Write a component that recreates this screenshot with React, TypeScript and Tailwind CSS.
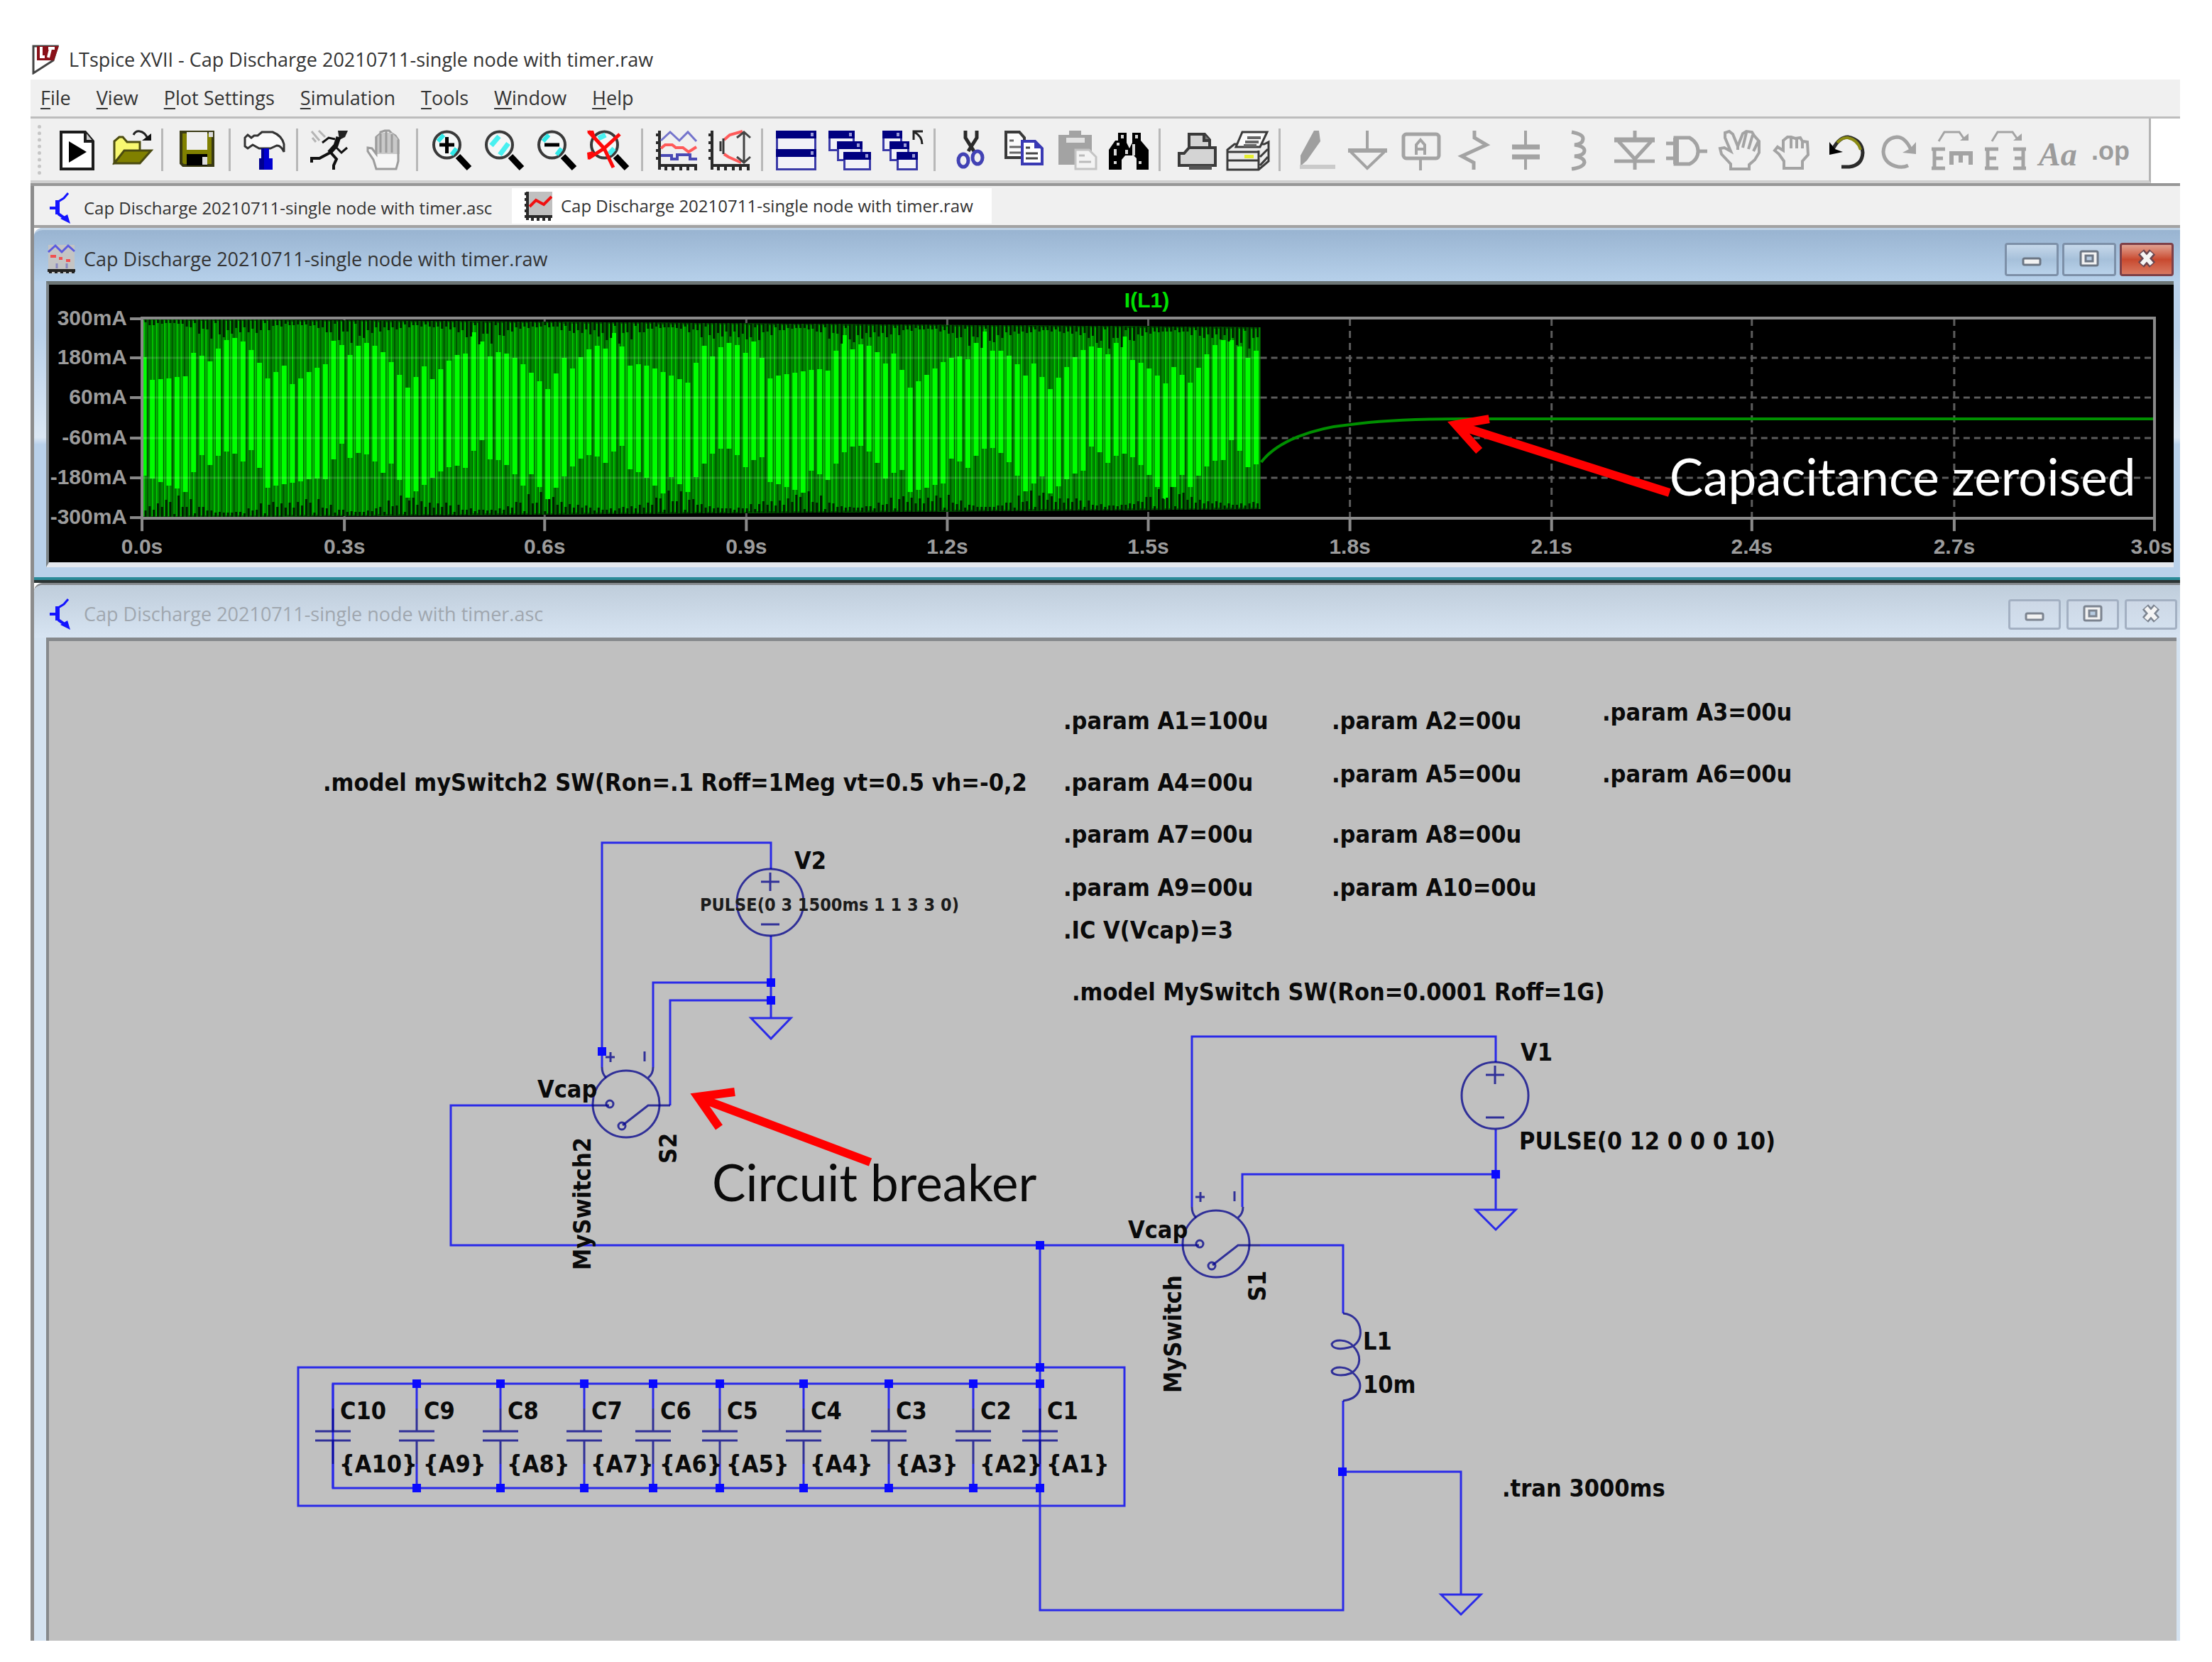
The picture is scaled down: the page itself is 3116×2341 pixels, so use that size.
import React from "react";

const UI = "font-['Open_Sans','Noto_Sans',sans-serif]";
const G = "#a3a3a3";
const NAVY = "#00008b";

/* ---------- toolbar icons (60 x 60 grid) ---------- */

function Lens({ children }: { children?: React.ReactNode }) {
  return (
    <g>
      <path d="M40 39 L56 56" stroke="#000" strokeWidth="9" />
      <circle cx="24.5" cy="23" r="18.5" fill="#f4f6f6" stroke="#3a3a3a" strokeWidth="4" />
      {children}
    </g>
  );
}

function MiniWindow({ x, y, w, h }: { x: number; y: number; w: number; h: number }) {
  return (
    <g>
      <rect x={x + 1.5} y={y + 1.5} width={w - 3} height={h - 3} fill="#f2f2f8" stroke="#3a3aa8" strokeWidth="3" />
      <rect x={x} y={y} width={w} height="11" fill="#000080" />
      <rect x={x + w - 8} y={y + 3} width="4" height="5" fill="#9a9ad8" />
    </g>
  );
}

function Axes() {
  return (
    <path
      d="M7 3V58M2 9H7M2 20H7M2 31H7M2 42H7M5 52H60M16 52V59M26 52V59M37 52V59M47 52V59M58 52V59"
      stroke="#2a2a2a"
      strokeWidth="4"
    />
  );
}

const icons: Record<string, React.ReactNode> = {
  "New Schematic": (
    <g stroke="#1c1c1c" strokeWidth="4">
      <path d="M9 5H43L54 18V57H9Z" fill="#fff" />
      <path d="M43 5V18H54" fill="#ccc" />
      <path d="M20 18L45 33L20 48Z" fill="#000" stroke="none" />
    </g>
  ),
  Open: (
    <g>
      <path d="M10 48V18L17 12H22L28 19H46V32L24 34Z" fill="#f8f870" stroke="#4d4d10" strokeWidth="3" />
      <path d="M10 49L24 31H62L46 49Z" fill="#808000" stroke="#4a4a10" strokeWidth="3" />
      <path d="M37 9Q40 3 46 4Q53 5 57 14" stroke="#222" strokeWidth="3" fill="none" />
      <path d="M49 17H62V7Z" fill="#111" />
    </g>
  ),
  Save: (
    <g>
      <path d="M9 5H54V52H12L9 49Z" fill="#808000" stroke="#3a3a14" strokeWidth="4" />
      <rect x="17" y="5" width="29" height="25" fill="#efefef" />
      <rect x="48" y="5" width="6" height="7" fill="#ddd" />
      <rect x="17" y="36" width="29" height="16" fill="#000" />
      <rect x="39" y="40" width="7" height="11" fill="#ddd" />
    </g>
  ),
  "Control Panel": (
    <g>
      <path
        d="M4 13L8 9L13 13L17 10H22L28 5H43Q56 10 59 22V33Q55 24 49 24L40 28H24L15 23L8 28L4 25Z"
        fill="#fafafa"
        stroke="#333"
        strokeWidth="3"
      />
      <path d="M27 28H38V42H43V58H24V42H27Z" fill="#0000d0" />
      <path d="M27 28H31V58H24V42H27Z" fill="#000090" />
    </g>
  ),
  Run: (
    <g fill="none" stroke="#111" strokeWidth="3">
      <path d="M40 3H54L50 12L42 16Z" fill="#222" stroke="none" />
      <path d="M41 12L37 24L28 34" strokeWidth="7" />
      <path d="M36 15L27 13L18 20M38 27L45 34L53 27" />
      <path d="M29 34L14 42H3V48M30 34L38 43L34 52V58" strokeWidth="4" />
      <path d="M3 4L14 17M13 3L22 12M4 13L9 19" stroke="#b5b5b5" />
    </g>
  ),
  Halt: (
    <g stroke="#9c9c9c" strokeWidth="3" fill="#f6f6f6">
      <path d="M20 57L16 44L8 32V27L14 28L20 36V12L26 7V5L32 3H38L42 7L47 10L51 16V46L48 57Z" />
      <path d="M21 12L27 6H42L50 14V36H21Z" fill="#c9c9c9" stroke="none" />
      <path d="M26 7V34M34 4V34M42 8V34M20 12V36M51 16V36" fill="none" />
    </g>
  ),
  "Zoom to rectangle": (
    <Lens>
      <path d="M12 18L20 9M31 37L38 28" stroke="#30e8e8" strokeWidth="6" />
      <path d="M14 23H35M24.5 12V35" stroke="#000" strokeWidth="5" />
    </Lens>
  ),
  Pan: (
    <Lens>
      <path d="M13 24L24 11M25 37L37 21" stroke="#48f0f0" strokeWidth="7" />
    </Lens>
  ),
  "Zoom back": (
    <Lens>
      <path d="M12 18L20 9M31 37L38 28" stroke="#30e8e8" strokeWidth="6" />
      <path d="M14 23H35" stroke="#000" strokeWidth="5" />
    </Lens>
  ),
  "Zoom full extents": (
    <Lens>
      <path d="M16 14L26 9M31 36L38 28" stroke="#48f0f0" strokeWidth="7" />
      <path d="M2 4L24 28L37 55M46 8L24 28L2 42" stroke="#ff0a0a" strokeWidth="5" fill="none" />
      <path d="M0 3H9L12 12L3 9ZM0 34L8 32L12 38L1 44Z" fill="#ff0a0a" />
    </Lens>
  ),
  Autorange: (
    <g fill="none">
      <Axes />
      <path d="M9 17L22 5L35 17L47 5L59 18" stroke="#7474cc" strokeWidth="3" />
      <path d="M9 28L15 23H25L30 27H40L48 33L59 26" stroke="#ff5a5a" strokeWidth="4" />
      <path d="M9 38H24V43H32V37H50V43H60" stroke="#4a4ab4" strokeWidth="4" />
    </g>
  ),
  "Plot limits": (
    <g fill="none">
      <Axes />
      <path d="M50 4L32 9L24 16M24 36L30 40L48 48" stroke="#ff5a5a" strokeWidth="4" />
      <path d="M23 14V36M19 18V32" stroke="#333" strokeWidth="3" />
      <path d="M52 5V47M42 13L52 5L61 13M42 40L52 48L61 40" stroke="#444" strokeWidth="3" />
    </g>
  ),
  "Tile Horizontally": (
    <g>
      <MiniWindow x={2} y={3} w={57} h={29} />
      <MiniWindow x={2} y={29} w={57} h={30} />
    </g>
  ),
  Cascade: (
    <g>
      <MiniWindow x={2} y={3} w={37} h={29} />
      <MiniWindow x={14} y={18} w={36} h={28} />
      <MiniWindow x={23} y={33} w={39} h={26} />
    </g>
  ),
  "Close all": (
    <g>
      <MiniWindow x={4} y={3} w={28} h={29} />
      <MiniWindow x={14} y={18} w={28} h={28} />
      <MiniWindow x={24} y={33} w={30} h={26} />
      <path d="M48 16V4H61M49 5Q60 11 60 22" stroke="#222" strokeWidth="3" fill="none" />
    </g>
  ),
  Cut: (
    <g fill="none">
      <path d="M26 3V13L38 32M42 3V13L30 32" stroke="#2a2a2a" strokeWidth="5" />
      <ellipse cx="23" cy="45" rx="7" ry="9" stroke="#4242b4" strokeWidth="5" />
      <ellipse cx="43" cy="41" rx="7" ry="9" stroke="#4242b4" strokeWidth="5" />
    </g>
  ),
  Copy: (
    <g>
      <path d="M9 5H28L35 13V41H9Z" fill="#fbfbfb" stroke="#3a3a3a" strokeWidth="4" />
      <path d="M14 17H20M14 26H30M14 34H30" stroke="#666" strokeWidth="3" />
      <path d="M32 18H50L60 28V50H32Z" fill="#fff" stroke="#3a3ab4" strokeWidth="4" />
      <path d="M49 18V28H60Z" fill="#3a3ab4" />
      <path d="M37 27H43M37 35H54M37 42H54" stroke="#444" strokeWidth="3" />
    </g>
  ),
  Paste: (
    <g>
      <path d="M9 9H24V3H41V9H56V51H9Z" fill={G} />
      <rect x="20" y="13" width="26" height="7" fill="#e2e2e2" />
      <path d="M33 30H52L62 40V57H33Z" fill="#f3f3f3" stroke="#c4c4c4" strokeWidth="3" />
      <path d="M38 38H46M38 47H55" stroke="#bbb" strokeWidth="3" />
    </g>
  ),
  Find: (
    <g>
      <path d="M19 6H31V20L35 28L39 20V6H51V17L62 30V58H45V42L41 38H29L24 44V58H6V30L15 17H19Z" fill="#000" />
      <path d="M15 29V38M41 22V38M25 9V14M45 9V14M19 24V20M15 46V50M50 46V50M31 30V36" stroke="#d8d8d8" strokeWidth="4" />
    </g>
  ),
  "Print setup": (
    <g stroke="#3a3a3a" strokeWidth="4">
      <path d="M24 26V8H46L53 16V26" fill="#d4d4d4" />
      <path d="M10 52V35H17L24 27H61V52Z" fill="#d4d4d4" />
      <path d="M45 8V17H54" fill="#777" />
      <path d="M24 55H56" stroke="#555" strokeWidth="6" />
    </g>
  ),
  Print: (
    <g stroke="#3a3a3a" strokeWidth="3">
      <path d="M4 30L14 22H56L62 19V46L48 58H4Z" fill="#ececec" />
      <path d="M16 26L25 5H60L50 26Z" fill="#fbfbfb" />
      <path d="M32 13H51M29 19H48M27 24H45" stroke="#666" strokeWidth="4" />
      <path d="M4 33H48M4 45H48M48 31V57M50 40L61 29M50 52L61 40" fill="none" />
      <rect x="28" y="37" width="13" height="5" fill="#e6ee30" stroke="none" />
    </g>
  ),
  Wire: (
    <g>
      <path d="M30 3H37L39 18L20 45L11 53V38Z" fill="#9f9f9f" />
      <path d="M10 54H60" stroke="#cacaca" strokeWidth="6" />
    </g>
  ),
  Ground: (
    <g fill="none" stroke={G} strokeWidth="4">
      <path d="M30 3V28" />
      <path d="M3 31H58" strokeWidth="6" />
      <path d="M7 33L30 56L54 33" />
    </g>
  ),
  "Label Net": (
    <g fill="none" stroke={G} strokeWidth="4">
      <rect x="6" y="8" width="50" height="34" rx="4" strokeWidth="5" />
      <path d="M24 37V23L30 16L36 23V37M24 29H36M30 42V59" />
    </g>
  ),
  Resistor: <path d="M31 3V13L48 23L13 39L30 48V58" fill="none" stroke={G} strokeWidth="5" />,
  Capacitor: (
    <g stroke={G}>
      <path d="M28 3V24M28 42V58" strokeWidth="4" />
      <path d="M9 26H48M9 40H48" strokeWidth="7" />
    </g>
  ),
  Inductor: <path d="M18 5Q34 8 34 14Q34 22 22 23Q36 25 36 31Q36 38 22 39Q36 41 36 48Q34 55 18 57" fill="none" stroke={G} strokeWidth="5" />,
  Diode: (
    <g stroke={G} fill="none">
      <path d="M32 3V16M32 42V58M3 46H60" strokeWidth="5" />
      <path d="M3 16H60" strokeWidth="7" />
      <path d="M9 18L32 43L55 18" strokeWidth="5" />
    </g>
  ),
  Component: (
    <g stroke={G} fill="none" strokeWidth="5">
      <path d="M14 13H34Q46 20 46 32Q46 44 34 50H14Z" />
      <path d="M15 13V50" strokeWidth="8" />
      <path d="M1 21H14M1 42H14M46 32H59" />
    </g>
  ),
  Move: (
    <path
      d="M17 57V50L4 36L2 28L8 27L17 32L9 13L9 6L15 4L20 8L27 25L34 7L39 4L47 5L50 10L57 18L57 34L51 44L43 51V57ZM27 25V30M39 6L34 27M48 9L42 29M56 18L49 32"
      fill="none"
      stroke={G}
      strokeWidth="4"
    />
  ),
  Drag: (
    <path
      d="M17 56V46L10 36L4 31L8 26L16 31V17L22 12H27L33 14L40 13L43 18L50 19L51 37L43 46V56ZM16 17V31M27 14V28M35 14V28M43 18V28"
      fill="none"
      stroke={G}
      strokeWidth="4"
    />
  ),
  Undo: (
    <g fill="none">
      <path d="M11 29Q20 12 32 12Q52 16 53 34Q52 52 34 54H23" stroke="#2b2b2b" strokeWidth="5" />
      <path d="M17 20Q24 12 32 13Q46 16 50 30" stroke="#8b8b14" strokeWidth="4" />
      <path d="M6 19V37L25 33L14 29Z" fill="#000" />
    </g>
  ),
  Redo: (
    <g fill="none">
      <path d="M42 52Q34 56 24 53Q8 48 7 33Q8 14 26 12Q38 12 46 30" stroke={G} strokeWidth="5" />
      <path d="M53 19V36L34 34L45 28Z" fill={G} />
    </g>
  ),
  Rotate: (
    <g fill="none" stroke={G} strokeWidth="4">
      <path d="M10 18L18 5H39L46 15" strokeWidth="3" />
      <path d="M40 17H52V7Z" fill={G} stroke="none" />
      <path d="M4 27V58M0 29H19M4 42H16M0 56H19" strokeWidth="5" />
      <path d="M25 35H58M28 33V51M41 35V48M55 33V51" strokeWidth="6" />
    </g>
  ),
  Mirror: (
    <g fill="none" stroke={G} strokeWidth="5">
      <path d="M10 18L18 5H39L46 15" strokeWidth="3" />
      <path d="M40 17H52V7Z" fill={G} stroke="none" />
      <path d="M4 27V58M0 29H19M4 42H16M0 56H19" />
      <path d="M54 27V58M58 29H40M54 42H42M58 56H40" />
    </g>
  ),
  Text: (
    <text x="1" y="52" fill="#9c9c9c" className="font-['Liberation_Serif',serif] text-[46px] font-bold italic">
      Aa
    </text>
  ),
  "SPICE Directive": (
    <text x="0" y="44" fill="#9c9c9c" className="font-['Liberation_Sans',sans-serif] text-[36px] font-bold">
      .op
    </text>
  ),
};

const toolGroups: string[][] = [
  ["New Schematic", "Open"],
  ["Save"],
  ["Control Panel"],
  ["Run", "Halt"],
  ["Zoom to rectangle", "Pan", "Zoom back", "Zoom full extents"],
  ["Autorange", "Plot limits"],
  ["Tile Horizontally", "Cascade", "Close all"],
  ["Cut", "Copy", "Paste", "Find"],
  ["Print setup", "Print"],
  ["Wire", "Ground", "Label Net", "Resistor", "Capacitor", "Inductor", "Diode", "Component", "Move", "Drag", "Undo", "Redo", "Rotate", "Mirror", "Text", "SPICE Directive"],
];

function Toolbar() {
  return (
    <div className="flex border-b-[4px] border-[#979797] bg-white">
      <div className="flex h-[91px] items-center border-r-[3px] border-b-[4px] border-r-[#b4b4b4] border-b-[#cfcfcf] bg-[#f0f0f0] pr-[14px] pl-[10px]">
        <div className="mr-[12px] h-[70px] border-l-[5px] border-dotted border-[#c6c6c6]" />
        {toolGroups.map((group, gi) => (
          <React.Fragment key={gi}>
            {gi > 0 && <div className="mx-[9px] h-[60px] w-[3px] bg-[#b8b8b8]" />}
            {group.map((name) => (
              <button
                key={name}
                type="button"
                aria-label={name}
                className={gi === 9 ? "flex w-[75px] justify-center" : "flex w-[74px] justify-center"}
              >
                <svg viewBox="0 0 60 60" className="size-[60px] overflow-visible">
                  {icons[name]}
                </svg>
              </button>
            ))}
          </React.Fragment>
        ))}
      </div>
    </div>
  );
}

/* ---------- small window / tab icons ---------- */

function TransistorIcon() {
  return (
    <svg viewBox="0 0 40 44" className="h-[44px] w-[40px] shrink-0" fill="none" stroke="#1414ff">
      <path d="M4 22H14" strokeWidth="4" />
      <path d="M15 11V31" strokeWidth="6" />
      <path d="M16 13L24 8L30 1" strokeWidth="3" />
      <path d="M16 30L26 37" strokeWidth="4" />
      <path d="M19 37L29 31L33 44Z" fill="#1414ff" stroke="none" />
    </svg>
  );
}

function PlotIcon() {
  return (
    <svg viewBox="0 0 40 44" className="h-[44px] w-[40px] shrink-0" fill="none">
      <rect x="5" y="2" width="35" height="34" fill="#c0c0c0" />
      <path d="M5 2V42M1 5H5M1 13H5M1 21H5M1 29H5M1 37H40M12 37V43M20 37V43M28 37V43M36 37V43" stroke="#2a2a2a" strokeWidth="4" />
      <path d="M8 23L17 14L28 20L39 9" stroke="#f01010" strokeWidth="4" />
    </svg>
  );
}

function WaveIcon() {
  return (
    <svg viewBox="0 0 40 44" className="h-[44px] w-[40px] shrink-0" fill="none">
      <rect x="2" y="2" width="37" height="40" fill="#c4c4c4" />
      <path d="M2 12L12 3L21 12L30 3L39 11" stroke="#5a5ae0" strokeWidth="3" />
      <path d="M5 18H13M17 21H22M27 24H33" stroke="#f05050" strokeWidth="4" />
      <path d="M14 28V35M28 28V35" stroke="#8888c0" strokeWidth="3" />
      <path d="M1 38H40M5 42V36M13 42V36M21 42V36M29 42V36M37 42V36" stroke="#222" strokeWidth="4" />
    </svg>
  );
}

/* ---------- child window chrome ---------- */

function WindowButtons({ active }: { active: boolean }) {
  const size = active ? "h-[47px] w-[76px]" : "h-[43px] w-[74px]";
  const tone = active
    ? "border-[#7d90a8] bg-linear-to-b from-[#c6d8ea] via-[#a6c0da] to-[#b9d2ea]"
    : "border-[#a3b0c2] bg-linear-to-b from-[#cdd8e6] to-[#d3e0ee]";
  const close = active ? "border-[#7d4048] bg-linear-to-b from-[#e0a090] via-[#c8492f] to-[#d87860]" : tone;
  const base = "flex items-center justify-center rounded-[4px] border-[3px]";
  const line = active ? "#6c7684" : "#7c8490";
  return (
    <div className={active ? "flex gap-[5px]" : "flex gap-[8px]"}>
      <button type="button" aria-label="Minimize" className={`${base} ${size} ${tone}`}>
        <svg viewBox="0 0 30 30" className="size-[30px]">
          <rect x="3" y="14" width="24" height="9" rx="2" fill="#f2f2f2" stroke={line} strokeWidth="3" />
        </svg>
      </button>
      <button type="button" aria-label="Maximize" className={`${base} ${size} ${tone}`}>
        <svg viewBox="0 0 30 30" className="size-[30px]">
          <rect x="3" y="4" width="24" height="20" rx="2" fill="#f2f2f2" stroke={line} strokeWidth="3" />
          <rect x="10" y="10" width="10" height="8" fill="#b8cce2" stroke={line} strokeWidth="3" />
        </svg>
      </button>
      <button type="button" aria-label="Close" className={`${base} ${size} ${close}`}>
        <svg viewBox="0 0 30 30" className="size-[30px]">
          <path d="M7 5L23 23M23 5L7 23" stroke={active ? "#6a4650" : line} strokeWidth="11" />
          <path d="M8 6L22 22M22 6L8 22" stroke="#f5f5f5" strokeWidth="6" />
        </svg>
      </button>
    </div>
  );
}

/* ---------- waveform plot ---------- */

const PLOT = { left: 201, right: 3035, top: 448, bottom: 728, end: 1776 };
const yTicks = [
  ["300mA", 448],
  ["180mA", 503],
  ["60mA", 559],
  ["-60mA", 616],
  ["-180mA", 672],
  ["-300mA", 728],
] as const;
const xTicks = [
  ["0.0s", 201],
  ["0.3s", 486],
  ["0.6s", 768],
  ["0.9s", 1052],
  ["1.2s", 1335],
  ["1.5s", 1618],
  ["1.8s", 1902],
  ["2.1s", 2186],
  ["2.4s", 2468],
  ["2.7s", 2753],
  ["3.0s", 3035],
] as const;

function oscillation() {
  const dim: string[] = [];
  const mid: string[] = [];
  const bright: string[] = [];
  const dark: string[] = [];
  const noise = (k: number) => ((k * 7919 + 13 * k * k) % 17) / 17;
  const span = PLOT.end - PLOT.left;
  for (let k = 0; ; k++) {
    const x = PLOT.left + 2 + k * 5.8;
    if (x > PLOT.end - 2) break;
    const decay = (x - PLOT.left) / span;
    const top = PLOT.top + decay * 12;
    const bottom = PLOT.bottom - decay * 12;
    const phase = Math.cos(((x - 234) / 177) * 2 * Math.PI);
    dim.push(`M${x.toFixed(1)} ${top.toFixed(0)}V${bottom.toFixed(0)}`);
    dark.push(`M${(x + 3).toFixed(1)} ${top.toFixed(0)}v${(5 + 22 * noise(k) * (1.2 - phase) * 0.6).toFixed(0)}`);
    dark.push(`M${(x + 3).toFixed(1)} ${bottom.toFixed(0)}v-${(5 + 22 * noise(k + 5) * (1.2 + phase) * 0.6).toFixed(0)}`);
    if (k % 3 !== 1) mid.push(`M${(x + 1).toFixed(1)} ${(top + 2).toFixed(0)}V${(bottom - 2).toFixed(0)}`);
    if (k % 2 === 0) {
      const yt = 508 + 25 * phase + (noise(k) - 0.5) * 34;
      const yb = 662 + 26 * phase + (noise(k + 3) - 0.5) * 34;
      bright.push(`M${(x + 1).toFixed(1)} ${yt.toFixed(0)}V${yb.toFixed(0)}`);
    }
  }
  return { dim: dim.join(""), mid: mid.join(""), bright: bright.join(""), dark: dark.join("") };
}

const wave = oscillation();

function Plot() {
  return (
    <svg viewBox="70 400 2992 391" className="block h-auto w-full bg-black" role="img" aria-label="I(L1) waveform">
      <g stroke="#5c5c5c" strokeWidth="3" fill="none">
        {xTicks.slice(1, 10).map(([t, x]) => (
          <path key={t} d={`M${x} 448V728`} strokeDasharray="10 7" />
        ))}
        {yTicks.slice(1, 5).map(([t, y]) => (
          <path key={t} d={`M201 ${y}H3035`} strokeDasharray="9 6" />
        ))}
      </g>
      <path d="M201 448L1776 460V716L201 728Z" fill="#008600" />
      <g fill="none">
        <path d={wave.dim} stroke="#005600" strokeWidth="2" />
        <path d={wave.mid} stroke="#00c800" strokeWidth="2" />
        <path d={wave.bright} stroke="#00ff00" strokeWidth="7" />
        <path d={wave.dark} stroke="#001c00" strokeWidth="3" />
        <g stroke="#ffffff" strokeOpacity="0.14" strokeWidth="3">
          <path d="M201 503H1776M201 559H1776M201 616H1776M201 672H1776" />
        </g>
      </g>
      <path d="M1777 650C1800 620 1850 602 1903 597C1950 590 2010 589 2060 589H3035" stroke="#008f00" strokeWidth="4" fill="none" />
      <g stroke="#8a8a8a" strokeWidth="4" fill="none">
        <path d="M201 447H3035V729H201Z" />
        {xTicks.map(([t, x]) => (
          <path key={t} d={`M${x} 729V747`} />
        ))}
        {yTicks.map(([t, y]) => (
          <path key={t} d={`M184 ${y}H201`} />
        ))}
      </g>
      <g fill="#9c9c9c" className="font-['Liberation_Sans',sans-serif] text-[30px] font-bold">
        {yTicks.map(([t, y]) => (
          <text key={t} x="180" y={y + 9} textAnchor="end">
            {t}
          </text>
        ))}
        {xTicks.slice(0, 10).map(([t, x]) => (
          <text key={t} x={x} y="779" textAnchor="middle">
            {t}
          </text>
        ))}
        <text x="3060" y="779" textAnchor="end">
          3.0s
        </text>
      </g>
      <text x="1616" y="432" textAnchor="middle" fill="#00e000" className="font-['Liberation_Sans',sans-serif] text-[30px] font-bold">
        I(L1)
      </text>
      <path d="M2352 693L2060 600M2098 589L2051 597L2084 634" stroke="#ff0000" strokeWidth="12" fill="none" strokeLinejoin="miter" />
      <text x="2352" y="697" fill="#fff" className="font-['Lato',sans-serif] text-[71px]">
        Capacitance zeroised
      </text>
    </svg>
  );
}

/* ---------- schematic ---------- */

const caps: [number, number][] = [
  [10, 469],
  [9, 587],
  [8, 705],
  [7, 823],
  [6, 920],
  [5, 1014],
  [4, 1132],
  [3, 1252],
  [2, 1371],
  [1, 1465],
];

const labels: [number, number, string][] = [
  [455, 1114, ".model mySwitch2 SW(Ron=.1 Roff=1Meg vt=0.5 vh=-0,2"],
  [1498, 1027, ".param A1=100u"],
  [1876, 1027, ".param A2=00u"],
  [2257, 1015, ".param A3=00u"],
  [1498, 1114, ".param A4=00u"],
  [1876, 1102, ".param A5=00u"],
  [2257, 1102, ".param A6=00u"],
  [1498, 1187, ".param A7=00u"],
  [1876, 1187, ".param A8=00u"],
  [1498, 1262, ".param A9=00u"],
  [1876, 1262, ".param A10=00u"],
  [1498, 1322, ".IC V(Vcap)=3"],
  [1510, 1409, ".model MySwitch SW(Ron=0.0001 Roff=1G)"],
  [1119, 1224, "V2"],
  [2142, 1494, "V1"],
  [2140, 1619, "PULSE(0 12 0 0 0 10)"],
  [757, 1546, "Vcap"],
  [1589, 1744, "Vcap"],
  [1920, 1901, "L1"],
  [1920, 1962, "10m"],
  [2116, 2108, ".tran 3000ms"],
];

const junctions: [number, number][] = [
  [848, 1481],
  [1086, 1384],
  [1086, 1409],
  [2107, 1654],
  [1465, 1754],
  [1465, 1926],
  [1891, 2073],
];

function Source({ x, y }: { x: number; y: number }) {
  return (
    <g>
      <circle cx={x} cy={y} r="47" />
      <path d={`M${x - 13} ${y - 29}H${x + 13}M${x} ${y - 42}V${y - 16}M${x - 13} ${y + 31}H${x + 13}`} />
    </g>
  );
}

function Switch({ x, y }: { x: number; y: number }) {
  return (
    <g>
      <circle cx={x} cy={y} r="47" />
      <path d={`M${x - 47} ${y + 2}H${x - 24}M${x + 62} ${y + 2}H${x + 31}L${x - 5} ${y + 30}`} />
      <circle cx={x - 23} cy={y} r="5" />
      <circle cx={x - 6} cy={y + 31} r="5" />
      <path d={`M${x - 29} ${y - 66}H${x - 16}M${x - 22} ${y - 73}V${y - 59}M${x + 26} ${y - 74}V${y - 60}`} />
      <path d={`M${x - 34} ${y - 52}Q${x - 34} ${y - 42} ${x - 28} ${y - 37}M${x + 38} ${y - 52}Q${x + 38} ${y - 42} ${x + 31} ${y - 37}`} />
    </g>
  );
}

function Schematic() {
  return (
    <svg viewBox="69 903 2997 1408" className="block h-auto w-full" role="img" aria-label="Circuit schematic">
      <g fill="none" stroke="#2a2ae8" strokeWidth="3">
        <path d="M848 1503V1187H1086V1224M1086 1318V1434M920 1503V1384H1086M944 1557V1409H1086" />
        <path d="M1058 1434H1114L1086 1463Z" />
        <path d="M835 1557H635V1754H1666M1679 1700V1460H2107V1496M2107 1591V1704M1750 1700V1654H2107" />
        <path d="M2079 1704H2135L2107 1732Z" />
        <path d="M1775 1754H1892V1850M1892 1973V2268H1465V1754M1892 2073H2058V2246" />
        <path d="M2030 2246H2086L2058 2274Z" />
        <path d="M420 1926H1584V2121H420Z" />
        <path d="M1465 1949H469V2096H1465" />
        {caps.map(([n, x]) => (
          <path key={n} d={`M${x} 1949V1984M${x} 2062V2096`} />
        ))}
      </g>
      <g fill="none" stroke={NAVY} strokeOpacity="0.75" strokeWidth="3">
        {caps.map(([n, x]) => (
          <path key={n} d={`M${x} 1984V2016M${x - 25} 2016H${x + 25}M${x - 25} 2029H${x + 25}M${x} 2029V2062`} />
        ))}
        <Source x={1085} y={1271} />
        <Source x={2106} y={1543} />
        <Switch x={882} y={1555} />
        <Switch x={1713} y={1752} />
        <path d="M1892 1850C1922 1852 1924 1894 1900 1898C1884 1902 1876 1898 1876 1893C1880 1886 1898 1886 1906 1896C1918 1908 1918 1924 1904 1934C1888 1940 1876 1936 1876 1931C1880 1924 1898 1924 1906 1934C1924 1950 1916 1970 1892 1973" />
      </g>
      <g fill="#0a0aff">
        {junctions.map(([x, y]) => (
          <rect key={`${x}-${y}`} x={x - 6} y={y - 6} width="12" height="12" />
        ))}
        {caps.slice(1).map(([n, x]) => (
          <React.Fragment key={n}>
            <rect x={x - 6} y={1943} width="12" height="12" />
            <rect x={x - 6} y={2090} width="12" height="12" />
          </React.Fragment>
        ))}
      </g>
      <g fill="#0a0a0a" className="font-['DejaVu_Sans_Condensed','DejaVu_Sans',sans-serif] text-[34px] font-bold">
        {labels.map(([x, y, t]) => (
          <text key={`${x}-${y}`} x={x} y={y}>
            {t}
          </text>
        ))}
        {caps.map(([n, x]) => (
          <React.Fragment key={n}>
            <text x={x + 10} y="1999">{`C${n}`}</text>
            <text x={x + 9} y="2074">{`{A${n}}`}</text>
          </React.Fragment>
        ))}
        <text transform="translate(832 1789) rotate(-90)">MySwitch2</text>
        <text transform="translate(953 1639) rotate(-90)">S2</text>
        <text transform="translate(1664 1962) rotate(-90)">MySwitch</text>
        <text transform="translate(1783 1833) rotate(-90)">S1</text>
      </g>
      <text x="986" y="1283" fill="#1c1c1c" className="font-['DejaVu_Sans_Condensed','DejaVu_Sans',sans-serif] text-[25px] font-bold">
        PULSE(0 3 1500ms 1 1 3 3 0)
      </text>
      <path d="M1226 1637L984 1546M1035 1538L983 1545L1013 1588" stroke="#ff0000" strokeWidth="12" fill="none" />
      <text x="1003" y="1692" fill="#0a0a0a" className="font-['Lato',sans-serif] text-[71px]">
        Circuit breaker
      </text>
    </svg>
  );
}

/* ---------- page ---------- */

const menus = ["File", "View", "Plot Settings", "Simulation", "Tools", "Window", "Help"];

export default function App() {
  return (
    <div className={`min-h-screen bg-white pt-[56px] pr-[45px] pb-[31px] pl-[43px] text-[#333] ${UI}`}>
      <header className="flex h-[56px] items-center gap-[14px]">
        <svg viewBox="0 0 40 42" className="h-[42px] w-[40px]">
          <path d="M4 2V40L32 22L38 2Z" fill="#fff" stroke="#444" strokeWidth="3" />
          <path d="M9 2H40L33 22H9Z" fill="#8a1018" />
          <path d="M15 3V17H20M25 5H34M28 6L25 18" stroke="#fff" strokeWidth="4" fill="none" />
        </svg>
        <h1 className="text-[27px] whitespace-nowrap">LTspice XVII - Cap Discharge 20210711-single node with timer.raw</h1>
      </header>

      <nav className="flex h-[55px] items-center gap-[36px] border-b-[3px] border-[#bdbdbd] bg-[#f0f0f0] pl-[14px] text-[27px]">
        {menus.map((m) => (
          <button key={m} type="button" className="whitespace-nowrap">
            <span className="underline decoration-[2px] underline-offset-[4px]">{m[0]}</span>
            {m.slice(1)}
          </button>
        ))}
      </nav>

      <Toolbar />

      <div className="border-l-[5px] border-[#8c8c8c]">
        <div role="tablist" className="flex h-[59px] border-b-[4px] border-[#a2a2a2] bg-[#f0f0f0] text-[24px]">
          <button type="button" role="tab" aria-selected="false" className="flex w-[673px] items-center gap-[12px] pt-[6px] pl-[18px] whitespace-nowrap">
            <TransistorIcon />
            Cap Discharge 20210711-single node with timer.asc
          </button>
          <button type="button" role="tab" aria-selected="true" className="mt-[3px] mb-[2px] flex w-[676px] items-center gap-[12px] bg-white pl-[17px] whitespace-nowrap">
            <PlotIcon />
            Cap Discharge 20210711-single node with timer.raw
          </button>
        </div>

        <section className="rounded-tl-[12px] border-b-[4px] border-[#2b3434] bg-[#b9d1ea]">
          <div className="rounded-tl-[12px] border-b-[4px] border-b-[#2a8a98] bg-linear-to-b from-[#b9d1ea] from-30% via-[#dce8f4] via-60% to-[#b9d1ea] to-62% pr-[9px] pb-[14px] pl-[17px]">
            <div className="-mr-[9px] -ml-[17px] flex h-[75px] items-center justify-between rounded-tl-[12px] border-t-[3px] border-[#bdd0e4] bg-linear-to-b from-[#99b4d1] to-[#b6d0ea] pt-[10px] pr-[9px] pl-[18px]">
              <div className="flex items-center gap-[12px] text-[27px]">
                <WaveIcon />
                <h2 className="whitespace-nowrap">Cap Discharge 20210711-single node with timer.raw</h2>
              </div>
              <WindowButtons active />
            </div>
            <div className="border-t-[5px] border-b-[7px] border-l-[4px] border-t-[#6d7676] border-b-[#e4e8ee] border-l-[#7c8488]">
              <Plot />
            </div>
          </div>
        </section>

        <section className="rounded-tl-[12px] border-t-[3px] border-[#84888c] bg-[#d4e2f0] pr-[5px] pl-[17px]">
          <div className="-mr-[5px] -ml-[17px] flex h-[74px] items-center justify-between rounded-tl-[12px] bg-linear-to-b from-[#bfcddb] to-[#d7e4f2] pt-[8px] pr-[4px] pl-[18px]">
            <div className="flex items-center gap-[12px] text-[27px] text-[#a0a7af]">
              <TransistorIcon />
              <h2 className="whitespace-nowrap">Cap Discharge 20210711-single node with timer.asc</h2>
            </div>
            <WindowButtons active={false} />
          </div>
          <div className="border-t-[5px] border-l-[4px] border-[#86898c] bg-[#c0c0c0]">
            <Schematic />
          </div>
        </section>
      </div>
    </div>
  );
}
